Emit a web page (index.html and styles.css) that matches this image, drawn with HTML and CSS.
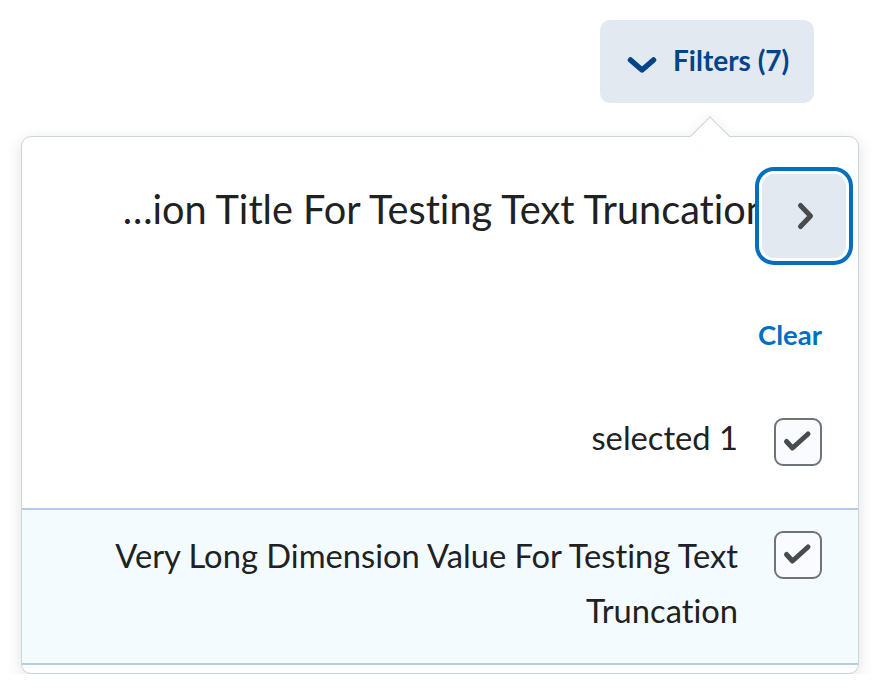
FILE: index.html
```html
<!DOCTYPE html>
<html lang="en">
<head>
<meta charset="utf-8">
<title>Filters</title>
<link rel="stylesheet" href="styles.css">
</head>
<body>
<div class="top">
  <button class="filters" type="button">
    <svg class="filters-icon" width="30" height="22" viewBox="0 0 30 22" aria-hidden="true"><polyline points="3.5,9 15,19 26.5,9" fill="none" stroke="#004489" stroke-width="5.5" stroke-linecap="round" stroke-linejoin="round"/></svg>
    <span class="filters-text">Filters (7)</span>
  </button>
</div>
<div class="dropdown" dir="rtl">
  <span class="pointer"></span>
  <div class="header">
    <button class="next" type="button" aria-label="Next">
      <svg width="84" height="84" viewBox="0 0 84 84" aria-hidden="true"><polyline points="38.5,31.5 48.5,42 38.5,52.5" fill="none" stroke="#494c4e" stroke-width="5" stroke-linecap="round" stroke-linejoin="round"/></svg>
    </button>
    <h2 class="title">Very Long Dimension Title For Testing Text Truncation</h2>
  </div>
  <div class="actions"><a class="clear" href="#">Clear</a></div>
  <ul class="list">
    <li class="item item-first">
      <span class="checkbox"><svg width="44" height="44" viewBox="0 0 44 44" aria-hidden="true"><polyline points="10.5,21.5 16.5,28 32,14" fill="none" stroke="#494c4e" stroke-width="5" stroke-linecap="round" stroke-linejoin="round"/></svg></span>
      <span class="label">selected 1</span>
    </li>
    <li class="item item-selected">
      <span class="checkbox"><svg width="44" height="44" viewBox="0 0 44 44" aria-hidden="true"><polyline points="10.5,21.5 16.5,28 32,14" fill="none" stroke="#494c4e" stroke-width="5" stroke-linecap="round" stroke-linejoin="round"/></svg></span>
      <span class="label">Very Long Dimension Value For Testing Text Truncation</span>
    </li>
  </ul>
</div>
</body>
</html>
```
FILE: styles.css
```css
* { box-sizing: border-box; }

html, body {
  margin: 0;
  padding: 0;
  background: #ffffff;
  font-family: Lato, "Liberation Sans", sans-serif;
  font-variant-ligatures: none;
  color: #202122;
}

.top {
  display: flex;
  justify-content: flex-end;
  padding: 20px 66px 0 0;
}

.filters {
  display: flex;
  align-items: center;
  gap: 16px;
  width: 214px;
  height: 83px;
  padding: 0 0 0 27px;
  border: none;
  border-radius: 10px;
  background: #e3e9f1;
  font-family: inherit;
  font-variant-ligatures: none;
  cursor: pointer;
}

.filters-icon { display: block; flex: none; }

.filters-text {
  font-size: 28px;
  font-weight: 700;
  color: #004489;
  margin-bottom: 4px;
}

.dropdown {
  position: relative;
  margin: 33px 21px 0;
  height: 538px;
  border: 1px solid #cdd5dc;
  border-radius: 10px;
  background: #ffffff;
  box-shadow: 0 4px 16px rgba(0, 0, 0, 0.12);
}

.pointer {
  position: absolute;
  left: 674px;
  top: -15px;
  width: 28px;
  height: 28px;
  background: #ffffff;
  border-top: 1px solid #cdd5dc;
  border-left: 1px solid #cdd5dc;
  transform: rotate(45deg);
  box-shadow: -3px -3px 8px rgba(0, 0, 0, 0.04);
}

.header {
  display: flex;
  align-items: flex-start;
  padding: 37px 12px 57px 90px;
}

.next {
  position: relative;
  z-index: 1;
  flex: none;
  width: 84px;
  height: 84px;
  padding: 0;
  border: none;
  border-radius: 12px;
  background: #e3e9f1;
  box-shadow: 0 0 0 3px #ffffff, 0 0 0 7px #006fbf;
  cursor: pointer;
}

.next svg { display: block; }

.title {
  flex: 1;
  min-width: 0;
  margin: 13px -6px 0 0;
  font-size: 39.7px;
  font-weight: 400;
  line-height: 44px;
  white-space: nowrap;
  overflow: hidden;
  text-overflow: ellipsis;
}

.actions {
  padding: 0 36px;
  height: 40px;
}

.clear {
  font-size: 27.5px;
  font-weight: 700;
  line-height: 40px;
  color: #006fbf;
  text-decoration: none;
}

.list {
  list-style: none;
  margin: 0;
  padding: 0;
}

.item {
  display: flex;
  align-items: flex-start;
  gap: 36px;
  padding: 0 36px;
}

.item-first {
  padding-top: 55px;
  padding-bottom: 42px;
}

.item-first .checkbox { margin-top: 8px; }

.item-selected {
  padding-top: 18px;
  padding-bottom: 25px;
  background: #f3fbff;
  border-top: 2px solid #b6cbe8;
  border-bottom: 2px solid #b6cbe8;
}

.item-selected .checkbox { margin-top: 3px; }

.checkbox {
  flex: none;
  width: 48px;
  height: 48px;
  border: 2px solid #6e7477;
  border-radius: 9px;
  background: #f9fbff;
}

.checkbox svg { display: block; }

.label {
  flex: 1;
  min-width: 0;
  font-size: 32.7px;
  line-height: 55px;
}
```
